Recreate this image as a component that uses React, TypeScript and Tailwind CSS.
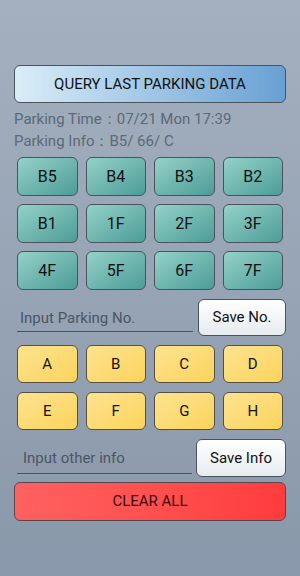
const floors = ['B5', 'B4', 'B3', 'B2', 'B1', '1F', '2F', '3F', '4F', '5F', '6F', '7F']
const zones = ['A', 'B', 'C', 'D', 'E', 'F', 'G', 'H']

const App = () => {
  return (
    <div
      className="flex h-[576px] w-[300px] flex-col bg-gradient-to-b from-[#a4b0bf] to-[#8998aa] px-[14px] pt-[65px]"
      style={{ fontFamily: 'Roboto, "Noto Sans", sans-serif' }}
    >
      {/* query */}
      <button className="h-[38px] w-full rounded-[6px] border-[1.5px] border-[#4a525d] bg-gradient-to-r from-[#d9edf7] to-[#68a0d3] text-[15px] text-[#111]">
        QUERY LAST PARKING DATA
      </button>
      <div className="mt-[5px] text-[15px] leading-[22px] text-[#5c6977]">
        <div>Parking Time：07/21 Mon 17:39</div>
        <div>Parking Info：B5/ 66/ C</div>
      </div>

      {/* floors */}
      <div className="mt-[5px] grid grid-cols-4 gap-x-[8px] gap-y-[8px] px-[3px]">
        {floors.map((f) => (
          <button
            key={f}
            className="h-[39px] rounded-[6px] border-[1.5px] border-[#4a525d] bg-gradient-to-br from-[#93d2c9] to-[#4c9c97] text-[16px] text-[#111]"
          >
            {f}
          </button>
        ))}
      </div>

      {/* parking no */}
      <div className="mt-[9px] flex items-center">
        <div className="ml-[3px] flex h-[28px] w-[176px] items-end border-b border-[#4a5360] pb-[1px] pl-[3px] text-[15px] text-[#4b5663]">
          Input Parking No.
        </div>
        <button className="ml-auto h-[37px] w-[88px] rounded-[6px] border-[1.5px] border-[#4a525d] bg-gradient-to-b from-white to-[#e6ebee] text-[15px] text-[#111]">
          Save No.
        </button>
      </div>

      {/* zones */}
      <div className="mt-[9px] grid grid-cols-4 gap-x-[8px] gap-y-[9px] px-[3px]">
        {zones.map((z) => (
          <button
            key={z}
            className="h-[38px] rounded-[6px] border-[1.5px] border-[#574f40] bg-gradient-to-br from-[#fde38f] to-[#fcd45a] text-[15px] text-[#111]"
          >
            {z}
          </button>
        ))}
      </div>

      {/* other info */}
      <div className="mt-[9px] flex items-center">
        <div className="ml-[3px] flex h-[31px] w-[175px] items-end border-b border-[#4a5360] pb-[3px] pl-[6px] text-[15px] text-[#4b5663]">
          Input other info
        </div>
        <button className="ml-auto h-[38px] w-[90px] rounded-[6px] border-[1.5px] border-[#4a525d] bg-gradient-to-b from-white to-[#e6ebee] text-[15px] text-[#111]">
          Save Info
        </button>
      </div>

      <button className="mt-[5px] h-[39px] w-full rounded-[6px] border-[1.5px] border-[#5a474d] bg-gradient-to-r from-[#ff6161] to-[#ff3c3c] text-[15px] text-[#3a0a0a]">
        CLEAR ALL
      </button>
    </div>
  )
}
export default App
